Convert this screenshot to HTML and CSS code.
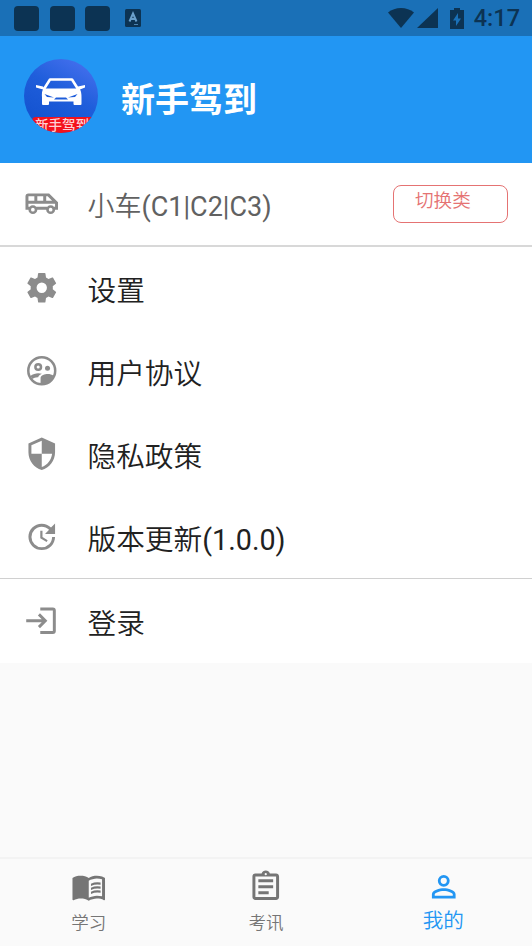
FILE: index.html
```html
<!DOCTYPE html>
<html lang="zh-CN">
<head>
<meta charset="utf-8">
<title>新手驾到</title>
<link rel="stylesheet" href="styles.css">
</head>
<body>
<div class="app">
  <div class="status">
    <i class="block"></i><i class="block"></i><i class="block"></i>
    <svg class="note" viewBox="0 0 16 18"><rect width="16" height="18" rx="1.5" fill="#0c3353"/><path d="M4.500 12.500 8 4.500l3.500 8M5.800 10h4.400" fill="none" stroke="#6aa0cc" stroke-width="2"/><path d="M9 15.500h4" stroke="#4c83b0" stroke-width="1"/></svg>
    <svg class="wifi" viewBox="0 0 26 20"><path d="M0 4.500C7-1.500 19-1.500 26 4.500L13 20z"/></svg>
    <svg class="signal" viewBox="0 0 21 20"><path d="M21 0v20H0z"/></svg>
    <svg class="battery" viewBox="0 0 14 21"><path fill-rule="evenodd" d="M4 0h6v2h4v19H0V2h4zM8 5l-5 7.500h3V18l5-7.500H8z"/></svg>
    <span class="clock">4:17</span>
  </div>
  <header class="profile">
    <svg class="avatar" viewBox="0 0 74 74">
      <defs>
        <clipPath id="round"><circle cx="37" cy="37" r="37"/></clipPath>
        <linearGradient id="blue" x1="0.800" y1="0" x2="0.300" y2="0.900"><stop offset="0" stop-color="#4670ee"/><stop offset="0.500" stop-color="#1f5edb"/><stop offset="1" stop-color="#1453d0"/></linearGradient>
      </defs>
      <g clip-path="url(#round)">
        <rect width="74" height="74" fill="url(#blue)"/>
        <path d="M20 30 26 20.500h22L54 30" fill="none" stroke="#fff" stroke-width="2.600" stroke-linejoin="round"/>
        <path fill="#fff" fill-rule="evenodd" d="M12 26l7 1.500 1.500 2h32l1.500-2 7-1.500v2.500l-5 2q1.500 2 1.500 8v6.500q0 1-1 1h-6q-1 0-1-1V42.500H25V45q0 1-1 1h-5q-1 0-1-1v-6.500q-.5-6 1-8l-7-2zM20.500 35l2.500 3 7 .5zM53.500 35l-9.500 3.500 7-.5zM30 40.500h14l-2-2H32z"/>
        <rect x="8" y="58" width="62" height="20" rx="4" fill="#f4121c"/>
        <text class="avatar-text" x="38" y="71" text-anchor="middle">新手驾到</text>
      </g>
    </svg>
    <h1>新手驾到</h1>
  </header>
  <main class="list">
    <div class="row vehicle">
      <svg class="icon" viewBox="0 0 24 24"><path fill-rule="evenodd" d="M17 5H3a2 2 0 0 0-2 2v9h2a3 3 0 0 0 6 0h6a3 3 0 0 0 6 0h2v-5zM15 7h1l3 3h-4zM9 7h4v3H9zM3 7h4v3H3zM6 17.250a1.250 1.250 0 1 1 0-2.500 1.250 1.250 0 0 1 0 2.500zM18 17.250a1.250 1.250 0 1 1 0-2.500 1.250 1.250 0 0 1 0 2.500zM21 14h-.78a3 3 0 0 0-4.440 0H8.220a3 3 0 0 0-4.440 0H3v-2h18z"/></svg>
      <span class="label">小车<span class="latin">(C1|C2|C3)</span></span>
      <div class="switch">切换类型</div>
    </div>
    <div class="row">
      <svg class="icon" viewBox="0 0 24 24"><path d="M19.430 12.980c.04-.32.07-.64.07-.98s-.03-.66-.07-.98l2.110-1.650c.19-.15.24-.42.12-.64l-2-3.460c-.12-.22-.39-.3-.61-.22l-2.490 1c-.52-.4-1.080-.73-1.690-.98l-.38-2.650A.488.488 0 0 0 14 2h-4c-.25 0-.46.18-.49.42l-.38 2.650c-.61.25-1.170.59-1.690.98l-2.490-1c-.23-.09-.49 0-.61.22l-2 3.460c-.13.22-.07.49.12.64l2.110 1.650c-.04.32-.07.65-.07.98s.03.66.07.98l-2.110 1.650c-.19.15-.24.42-.12.64l2 3.460c.12.22.39.3.61.22l2.490-1c.52.4 1.080.73 1.690.98l.38 2.650c.03.24.24.42.49.42h4c.25 0 .46-.18.49-.42l.38-2.650c.61-.25 1.170-.59 1.690-.98l2.490 1c.23.09.49 0 .61-.22l2-3.460c.12-.22.07-.49-.12-.64zM12 15.500a3.500 3.500 0 1 1 0-7 3.500 3.500 0 0 1 0 7z"/></svg>
      <span class="label">设置</span>
    </div>
    <div class="row">
      <svg class="icon" viewBox="0 0 24 24"><circle class="line" cx="12" cy="12" r="9.100"/><circle class="line" cx="9.600" cy="9.500" r="1.900"/><circle cx="15.900" cy="10.300" r="1.700"/><path d="M4.300 15.600c1.500-1.200 3.700-1.900 5.300-1.900.9 0 1.700.1 2.500.4-1.400.6-2.100 1.200-2.500 2.300-1.800-.1-2.800.4-3.800 1.200zM11.200 21v-4.100c0-1.800 2.900-2.700 4.800-2.700 1.500 0 3 .4 4 1.100-1.500 3.500-4.800 5.700-8.800 5.700z"/></svg>
      <span class="label">用户协议</span>
    </div>
    <div class="row">
      <svg class="icon" viewBox="0 0 24 24"><path d="M12 1 3 5v6c0 5.550 3.840 10.740 9 12 5.160-1.260 9-6.450 9-12V5zm0 10.990h7c-.53 4.120-3.280 7.790-7 8.940V12H5V6.300l7-3.110z"/></svg>
      <span class="label">隐私政策</span>
    </div>
    <div class="row">
      <svg class="icon" viewBox="0 0 24 24"><path d="M21 10.120h-6.780l2.740-2.820c-2.730-2.700-7.150-2.800-9.880-.1a6.875 6.875 0 0 0 0 9.790 7.020 7.020 0 0 0 9.880 0C18.320 15.650 19 14.080 19 12.100h2c0 1.980-.88 4.550-2.640 6.290-3.510 3.480-9.210 3.480-12.720 0-3.500-3.470-3.530-9.110-.02-12.580a8.987 8.987 0 0 1 12.650 0L21 3zM12.500 8v4.250l3.500 2.080-.72 1.210L11 13V8z"/></svg>
      <span class="label">版本更新<span class="latin">(1.0.0)</span></span>
    </div>
    <div class="row login">
      <svg class="icon" viewBox="0 0 24 24"><path d="M11 3h8.500a2 2 0 0 1 2 2v14a2 2 0 0 1-2 2H11v-2h8.500V5H11zM10.800 7l5 5-5 5-1.400-1.400L12 13H1.500v-2H12L9.400 8.400z"/></svg>
      <span class="label">登录</span>
    </div>
  </main>
  <nav class="tabs">
    <div class="tab">
      <svg class="icon" viewBox="0 0 24 24"><path d="M21 5c-1.110-.35-2.330-.5-3.500-.5-1.950 0-4.050.4-5.500 1.500-1.450-1.100-3.550-1.500-5.500-1.500S2.450 4.900 1 6v14.650c0 .25.25.5.5.5.1 0 .15-.05.25-.05C3.100 20.450 5.050 20 6.500 20c1.950 0 4.050.4 5.500 1.500 1.350-.85 3.800-1.500 5.500-1.500 1.650 0 3.350.3 4.750 1.050.1.05.15.05.25.05.25 0 .5-.25.5-.5V6c-.6-.45-1.250-.75-2-1zm0 13.500c-1.100-.35-2.300-.5-3.500-.5-1.700 0-4.150.65-5.500 1.500V8c1.350-.85 3.800-1.500 5.500-1.500 1.200 0 2.400.15 3.500.5z"/><path d="M13.500 9.900q3-1.300 6.500-.7v1.500q-3.500-.6-6.500.8zM13.500 12.600q3-1.300 6.500-.7v1.500q-3.500-.6-6.500.8zM13.500 15.300q3-1.300 6.500-.7v1.500q-3.500-.6-6.500.8z"/></svg>
      <span>学习</span>
    </div>
    <div class="tab">
      <svg class="icon" viewBox="0 0 24 24"><path d="M7 15h7v2H7zm0-4h10v2H7zm0-4h10v2H7zm12-4h-4.180C14.400 1.840 13.300 1 12 1s-2.400.84-2.820 2H5a2 2 0 0 0-2 2v14c0 1.100.9 2 2 2h14c1.100 0 2-.9 2-2V5c0-1.100-.9-2-2-2zm-7-.25a.75.75 0 1 1 0 1.500.75.75 0 0 1 0-1.500zM19 19H5V5h14z"/></svg>
      <span>考讯</span>
    </div>
    <div class="tab active">
      <svg class="icon" viewBox="0 0 24 24"><path d="M12 5.900a2.100 2.100 0 1 1 0 4.200 2.100 2.100 0 0 1 0-4.200m0 9c2.970 0 6.100 1.460 6.100 2.100v1.100H5.900V17c0-.64 3.130-2.100 6.100-2.100M12 4a4 4 0 1 0 0 8 4 4 0 0 0 0-8zm0 9c-2.670 0-8 1.340-8 4v3h16v-3c0-2.660-5.330-4-8-4z"/></svg>
      <span>我的</span>
    </div>
  </nav>
</div>
</body>
</html>
```

FILE: styles.css
```css
* { box-sizing: border-box; }
body {
  margin: 0;
  font-family: Roboto, "Noto Sans CJK SC", sans-serif;
}
.app {
  width: 532px;
  height: 946px;
  display: flex;
  flex-direction: column;
  background: #fafafa;
  overflow: hidden;
}
.status {
  height: 36px;
  flex: none;
  display: flex;
  align-items: center;
  padding: 0 12px 0 14px;
  background: #1a70b7;
  fill: #0c3353;
}
.block {
  width: 25px;
  height: 25px;
  margin-right: 10.5px;
  border-radius: 4px;
  background: #0c3353;
}
.note { width: 16px; height: 18px; margin-left: 4.5px; }
.wifi { width: 26px; height: 20px; margin-left: auto; }
.signal { width: 21px; height: 20px; margin-left: 3px; }
.battery { width: 14px; height: 21px; margin-left: 12px; }
.clock {
  margin-left: 10px;
  font-size: 23.5px;
  font-weight: 500;
  line-height: 36px;
  color: #0c3353;
}
.profile {
  height: 127px;
  flex: none;
  display: flex;
  align-items: center;
  padding: 0 24px 7px 23.5px;
  background: #2296f3;
}
.avatar { width: 74px; height: 74px; }
.avatar-text { font-size: 13.5px; font-weight: 500; fill: #ffd0d4; }
h1 {
  margin: 8px 0 0 23.5px;
  color: #fff;
  font-size: 34px;
  font-weight: 700;
  line-height: 50px;
}
.list { background: #fff; }
.row {
  height: 83px;
  display: flex;
  align-items: center;
  padding: 0 24px 0 23.5px;
}
.icon {
  width: 35.5px;
  height: 35.5px;
  flex: none;
  display: block;
  fill: #8c8c8c;
}
.row .icon { margin-top: -1px; }
.line { fill: none; stroke: #8c8c8c; stroke-width: 1.7; }
.row .label {
  margin: 5px 0 0 28.5px;
  font-size: 28.7px;
  font-weight: 350;
  line-height: 42px;
  color: #212121;
}
.latin { font-weight: 400; }
.vehicle { height: 84px; border-bottom: 2px solid #d8d8d8; }
.row.vehicle .label { font-size: 27px; color: #616161; }
.row.vehicle .icon { margin-top: 0; }
.switch {
  width: 115px;
  height: 38px;
  margin-left: auto;
  padding: 0 20px 0 21px;
  border: 1.5px solid #e57373;
  border-radius: 8px;
  overflow: hidden;
  font-size: 18.6px;
  font-weight: 350;
  line-height: 31px;
  color: #e57373;
}
.login { height: 85px; margin-top: -1px; border-top: 1.5px solid #d0d0d0; }
.tabs {
  height: 89px;
  flex: none;
  display: flex;
  margin-top: auto;
  border-top: 2px solid #f3f3f3;
}
.tab {
  flex: 1;
  display: flex;
  flex-direction: column;
  align-items: center;
  padding-top: 10px;
  gap: 5px;
  font-size: 17.5px;
  font-weight: 350;
  line-height: 26px;
  color: #757575;
}
.tab .icon { fill: #757575; }
.tab.active { gap: 3px; font-size: 20.6px; color: #2296f3; }
.active .icon { fill: #2296f3; }
```
